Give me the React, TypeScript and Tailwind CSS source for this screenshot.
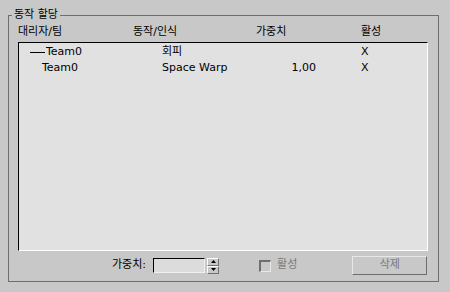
const font = { fontFamily: '"DejaVu Sans", "Noto Sans CJK KR", sans-serif' };

const rows = [
  { team: 'Team0', lead: true, action: '회피', weight: '', active: 'X' },
  { team: 'Team0', lead: false, action: 'Space Warp', weight: '1,00', active: 'X' },
];

function Spinner() {
  return (
    <div className="flex flex-col w-[12px] h-[16px] ml-[2px]">
      <div className="flex-1 flex items-center justify-center border-t border-l border-white border-r border-b border-r-[#707070] border-b-[#707070] bg-[#c8c8c8]">
        <svg width="5" height="3" viewBox="0 0 5 3">
          <polygon points="2.5,0 5,3 0,3" fill="#000" />
        </svg>
      </div>
      <div className="flex-1 flex items-center justify-center border-t border-l border-white border-r border-b border-r-[#707070] border-b-[#707070] bg-[#c8c8c8]">
        <svg width="5" height="3" viewBox="0 0 5 3">
          <polygon points="0,0 5,0 2.5,3" fill="#000" />
        </svg>
      </div>
    </div>
  );
}

export default function App() {
  return (
    <div className="w-[450px] h-[292px] bg-[#c8c8c8] text-[11px] text-black overflow-hidden" style={font}>
      <fieldset className="ml-[8px] mt-[8px] w-[431px] h-[274px] border border-[#6e6e6e]">
        <legend className="ml-[3px] px-[2px] leading-[14px]">동작 할당</legend>

        {/* column headers */}
        <div className="flex h-[20px] items-center pt-px pl-[9px]">
          <span className="w-[115px]">대리자/팀</span>
          <span className="w-[123px]">동작/인식</span>
          <span className="w-[105px]">가중치</span>
          <span>활성</span>
        </div>

        {/* list */}
        <div className="ml-[9px] w-[410px] h-[209px] bg-[#e1e1e1] border-t border-l border-black border-r border-b border-r-white border-b-white pt-px">
          {rows.map((r, i) => (
            <div key={i} className="flex h-[16px] items-center">
              <div className={`w-[143px] flex items-center ${r.lead ? 'pl-[11px]' : 'pl-[23px]'}`}>
                {r.lead && <span className="w-[15px] h-px bg-black mr-px" />}
                <span>{r.team}</span>
              </div>
              <span className="w-[110px]">{r.action}</span>
              <span className="w-[44px] text-right">{r.weight}</span>
              <span className="ml-[45px]">{r.active}</span>
            </div>
          ))}
        </div>

        {/* bottom controls */}
        <div className="flex items-center h-[29px] pl-[103px]">
          <span className="mr-[7px]">가중치:</span>
          <div className="w-[52px] h-[15px] bg-[#dcdcdc] border-t border-l border-black border-r border-b border-r-[#f0f0f0] border-b-[#f0f0f0]" />
          <Spinner />
          <div className="ml-[40px] w-[12px] h-[12px] bg-[#c8c8c8] border-t-2 border-l-2 border-[#6e6e6e] border-r border-b border-r-[#e8e8e8] border-b-[#e8e8e8]" />
          <span className="ml-[6px] text-[#7a7a7a]">활성</span>
          <div className="ml-[55px] w-[75px] h-[19px] flex items-center justify-center text-[#7a7a7a] border-t border-l border-[#e8e8e8] border-r border-b border-r-[#6e6e6e] border-b-[#6e6e6e]">
            삭제
          </div>
        </div>
      </fieldset>
    </div>
  );
}
